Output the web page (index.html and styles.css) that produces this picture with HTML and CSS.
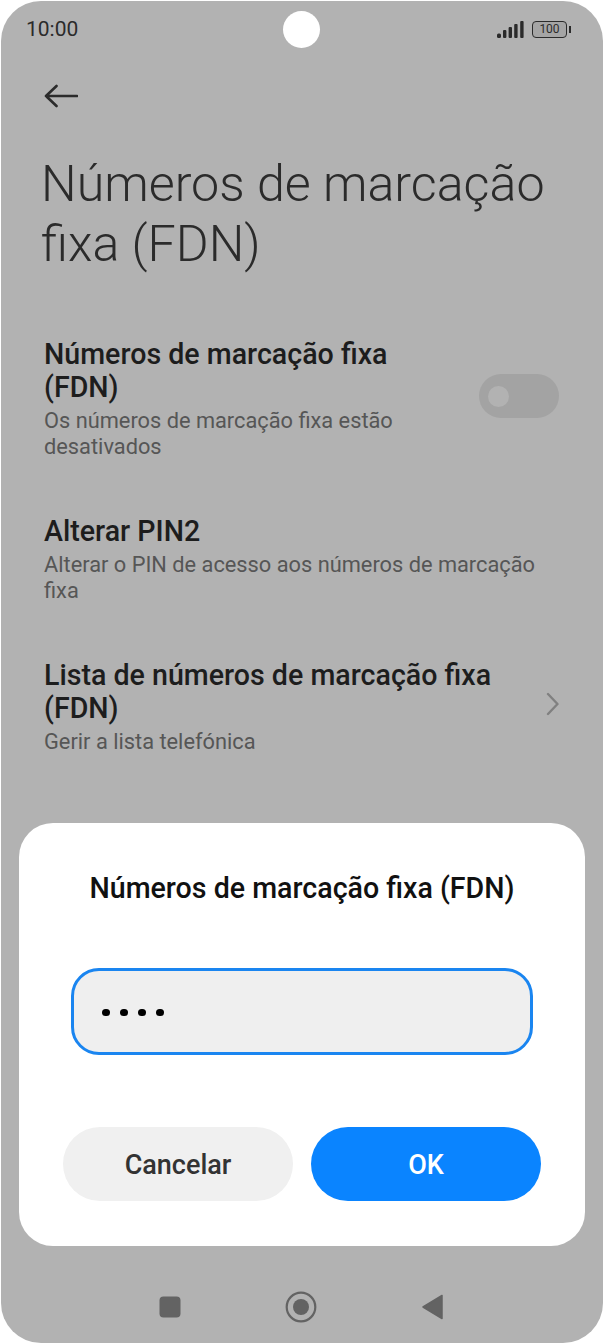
FILE: index.html
```html
<!DOCTYPE html>
<html lang="pt">

<head>
    <meta charset="UTF-8">
    <meta name="viewport" content="width=device-width, initial-scale=1.0">
    <title>Números de marcação fixa (FDN)</title>

    <link rel="stylesheet" href="styles.css">
</head>

<body>
    <div class="phone">
        <div class="status-bar">
            <span class="clock">10:00</span>
            <span class="camera"></span>
            <div class="status-icons">
                <svg class="signal" width="27" height="17" viewBox="0 0 27 17">
                    <rect x="0" y="12.5" width="4" height="4.5" rx="1.5" />
                    <rect x="6" y="9" width="3.4" height="8" rx="1" />
                    <rect x="11.6" y="6" width="3.4" height="11" rx="1" />
                    <rect x="17.2" y="3" width="3.4" height="14" rx="1" />
                    <rect x="23.2" y="0" width="3.4" height="17" rx="1" />
                </svg>
                <div class="battery"><span>100</span></div>
                <span class="battery-tip"></span>
            </div>
        </div>

        <div class="top-bar">
            <svg width="36" height="28" viewBox="0 0 36 28">
                <path d="M4 14H35M14.500 4L4 14L14.500 24" fill="none" stroke="#2b2b2b" stroke-width="2.600" stroke-linecap="round" stroke-linejoin="round" />
            </svg>
        </div>

        <h1 class="page-title">Números de marcação fixa (FDN)</h1>

        <div class="row row-first">
            <div class="row-text">
                <div class="row-title">Números de marcação fixa (FDN)</div>
                <div class="row-sub">Os números de marcação fixa estão desativados</div>
            </div>
            <div class="toggle"><span class="toggle-knob"></span></div>
        </div>

        <div class="row">
            <div class="row-text">
                <div class="row-title">Alterar PIN2</div>
                <div class="row-sub">Alterar o PIN de acesso aos números de marcação fixa</div>
            </div>
        </div>

        <div class="row">
            <div class="row-text">
                <div class="row-title">Lista de números de marcação fixa (FDN)</div>
                <div class="row-sub">Gerir a lista telefónica</div>
            </div>
            <svg class="chevron" width="16" height="26" viewBox="0 0 16 26">
                <path d="M5 3L14.500 13L5 23" fill="none" stroke="#808080" stroke-width="2.400" stroke-linecap="round" stroke-linejoin="round" />
            </svg>
        </div>

        <div class="dialog">
            <div class="dialog-title">Números de marcação fixa (FDN)</div>
            <div class="pin-field">
                <span class="pin-dot"></span>
                <span class="pin-dot"></span>
                <span class="pin-dot"></span>
                <span class="pin-dot"></span>
            </div>
            <div class="dialog-buttons">
                <button class="btn btn-cancel" type="button">Cancelar</button>
                <button class="btn btn-ok" type="button">OK</button>
            </div>
        </div>

        <div class="nav-bar">
            <svg width="24" height="24" viewBox="0 0 24 24">
                <rect x="1.500" y="1.500" width="21" height="21" rx="4" fill="#636363" />
            </svg>
            <svg width="32" height="32" viewBox="0 0 32 32">
                <circle cx="16" cy="16" r="14.300" fill="none" stroke="#636363" stroke-width="2.200" />
                <circle cx="16" cy="16" r="8" fill="#636363" />
            </svg>
            <svg width="24" height="28" viewBox="0 0 24 28">
                <path d="M21 2.500V25.500L2 14Z" fill="#636363" stroke="#636363" stroke-width="1.500" stroke-linejoin="round" />
            </svg>
        </div>
    </div>
</body>

</html>
```

FILE: styles.css
```css
html,
body {
    margin: 0;
    padding: 0;
    background: #fff;
}

body {
    width: 604px;
    height: 1344px;
    overflow: hidden;
    font-family: Roboto, "Liberation Sans", sans-serif;
}

.phone {
    position: relative;
    box-sizing: border-box;
    width: 602px;
    height: 1342px;
    margin: 1px;
    background: #b2b2b2;
    border-radius: 40px;
    overflow: hidden;
}

.status-bar {
    position: relative;
    display: flex;
    align-items: center;
    justify-content: space-between;
    height: 56px;
    padding: 0 32px 0 25px;
}

.clock {
    font-size: 21px;
    color: #2b2b2b;
}

.camera {
    position: absolute;
    left: 282px;
    top: 10px;
    width: 37px;
    height: 37px;
    background: #fff;
    border-radius: 50%;
}

.status-icons {
    display: flex;
    align-items: center;
}

.signal {
    fill: #2b2b2b;
    margin-right: 8px;
}

.battery {
    box-sizing: border-box;
    width: 35px;
    height: 17px;
    border: 1.5px solid #2b2b2b;
    border-radius: 4px;
    background: #a5a5a5;
    display: flex;
    align-items: center;
    justify-content: center;
}

.battery span {
    font-size: 12px;
    color: #2b2b2b;
}

.battery-tip {
    width: 2px;
    height: 7px;
    margin-left: 2px;
    background: #2b2b2b;
}

.top-bar {
    display: flex;
    align-items: center;
    height: 28px;
    padding: 25px 0 0 41px;
}

.page-title {
    margin: 0;
    padding: 44px 50px 0 40px;
    font-size: 50.2px;
    line-height: 60px;
    font-weight: 300;
    color: #2b2b2b;
}

.row {
    display: flex;
    align-items: center;
    justify-content: space-between;
    padding: 0 44px 0 43px;
    margin-top: 55px;
}

.row-first {
    margin-top: 64px;
}

.row-text {
    width: 497px;
}

.row-first .row-text {
    width: 400px;
}

.row-title {
    font-size: 28.6px;
    line-height: 33px;
    font-weight: 500;
    color: #1d1d1d;
}

.row-sub {
    margin-top: 4px;
    font-size: 21.8px;
    line-height: 26px;
    color: #565656;
}

.toggle {
    display: flex;
    align-items: center;
    box-sizing: border-box;
    width: 80px;
    height: 44px;
    margin-bottom: 6px;
    padding-left: 9px;
    background: #a3a3a3;
    border-radius: 22px;
}

.toggle-knob {
    width: 21px;
    height: 21px;
    background: #b2b2b2;
    border-radius: 50%;
}

.chevron {
    margin-bottom: 7px;
}

.dialog {
    position: absolute;
    left: 18px;
    top: 822px;
    box-sizing: border-box;
    width: 566px;
    height: 423px;
    padding: 48px 44px 0;
    background: #fff;
    border-radius: 34px;
}

.dialog-title {
    font-size: 28.6px;
    line-height: 34px;
    font-weight: 500;
    color: #111;
    text-align: center;
    white-space: nowrap;
}

.pin-field {
    display: flex;
    align-items: center;
    gap: 10.5px;
    box-sizing: border-box;
    width: 462px;
    height: 87px;
    margin: 63px 0 0 8px;
    padding: 2px 0 0 28px;
    background: #efefef;
    border: 3px solid #1a85f0;
    border-radius: 28px;
}

.pin-dot {
    width: 7.5px;
    height: 7.5px;
    background: #000;
    border-radius: 50%;
}

.dialog-buttons {
    display: flex;
    justify-content: space-between;
    margin-top: 72px;
}

.btn {
    width: 230px;
    height: 74px;
    padding-top: 3px;
    border: none;
    border-radius: 37px;
    font-family: Roboto, "Liberation Sans", sans-serif;
    font-size: 27px;
    font-weight: 500;
}

.btn-cancel {
    background: #f0f0f0;
    color: #333;
}

.btn-ok {
    background: #0a84ff;
    color: #fff;
}

.nav-bar {
    position: absolute;
    left: 0;
    right: 2px;
    top: 1288px;
    height: 36px;
    display: flex;
    align-items: center;
    justify-content: center;
    gap: 103.5px;
}
```
